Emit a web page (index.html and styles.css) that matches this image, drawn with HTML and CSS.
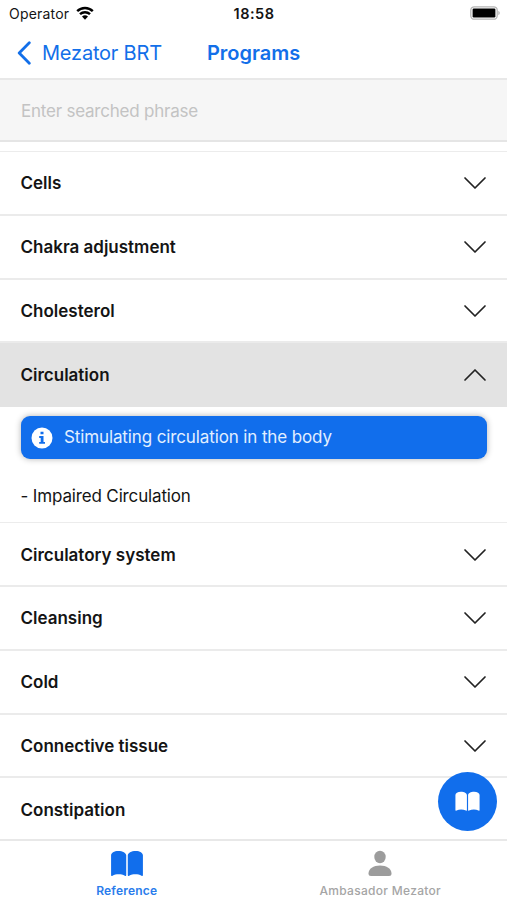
FILE: index.html
```html
<!DOCTYPE html>
<html lang="en">

<head>
    <meta charset="UTF-8">
    <meta name="viewport" content="width=device-width, initial-scale=1.0">
    <title>Programs</title>
    <link rel="stylesheet" href="styles.css">
</head>

<body>

    <svg class="symbols">
        <symbol id="down" viewBox="0 0 24 14">
            <path d="M2 2 L12 12 L22 2" />
        </symbol>
        <symbol id="book" viewBox="0 0 34 28">
            <path d="M0.500 5.500 C0.500 3 3.500 1 8 1 C12.500 1 16.200 3 16.200 5.500 V26 Q16.200 27.500 14.800 26.600 C11 24.600 5.500 24.600 2 26.600 Q0.500 27.500 0.500 26 Z" />
            <path d="M33.500 5.500 C33.500 3 30.500 1 26 1 C21.500 1 17.800 3 17.800 5.500 V26 Q17.800 27.500 19.200 26.600 C23 24.600 28.500 24.600 32 26.600 Q33.500 27.500 33.500 26 Z" />
        </symbol>
    </svg>

    <div class="app">
        <div class="status">
            <div class="operator">
                <span>Operator</span>
                <svg class="wifi" viewBox="0 0 18 14">
                    <path d="M1.200 5.200 A11 11 0 0 1 16.800 5.200" />
                    <path d="M4 8.200 A7.200 7.200 0 0 1 14 8.200" />
                    <path class="dot" d="M6 10.600 A4.400 4.400 0 0 1 12 10.600 L9 13.700 Z" />
                </svg>
            </div>
            <div class="time">18:58</div>
            <svg class="battery" viewBox="0 0 30 14">
                <rect class="battery-case" x="0.800" y="0.800" width="26.400" height="12.400" rx="3.500" />
                <rect x="2.600" y="2.600" width="22.800" height="8.800" rx="1.200" />
                <path class="battery-tip" d="M28.300 4.800 Q29.800 5.500 29.800 7 Q29.800 8.500 28.300 9.200 Z" />
            </svg>
        </div>

        <div class="nav">
            <a class="back">
                <svg viewBox="0 0 14 24">
                    <path d="M12.300 1.800 L2.200 12 L12.300 22.200" />
                </svg>
                <span>Mezator BRT</span>
            </a>
            <h1 class="title">Programs</h1>
        </div>

        <input class="search" type="text" placeholder="Enter searched phrase">

        <ul class="list">
            <li class="item"><span>Cells</span><svg class="arrow"><use href="#down" /></svg></li>
            <li class="item"><span>Chakra adjustment</span><svg class="arrow"><use href="#down" /></svg></li>
            <li class="item"><span>Cholesterol</span><svg class="arrow"><use href="#down" /></svg></li>
            <li class="item open"><span>Circulation</span><svg class="arrow"><use href="#down" /></svg></li>
            <li class="detail">
                <div class="info">
                    <svg viewBox="0 0 22 22">
                        <circle cx="11" cy="11" r="10.500" />
                        <path d="M9.500 4.700 H12.500 V7.300 H9.500 Z M8.200 9 H12.500 V14.900 H14 V16.800 H8.200 V14.900 H9.700 V10.900 H8.200 Z" />
                    </svg>
                    <span>Stimulating circulation in the body</span>
                </div>
                <p class="program">- Impaired Circulation</p>
            </li>
            <li class="item"><span>Circulatory system</span><svg class="arrow"><use href="#down" /></svg></li>
            <li class="item"><span>Cleansing</span><svg class="arrow"><use href="#down" /></svg></li>
            <li class="item"><span>Cold</span><svg class="arrow"><use href="#down" /></svg></li>
            <li class="item"><span>Connective tissue</span><svg class="arrow"><use href="#down" /></svg></li>
            <li class="item"><span>Constipation</span></li>
        </ul>

        <div class="float-button">
            <svg><use href="#book" /></svg>
        </div>

        <div class="tabs">
            <a class="tab active">
                <svg class="tab-book"><use href="#book" /></svg>
                <span>Reference</span>
            </a>
            <a class="tab">
                <svg class="tab-person" viewBox="0 0 24 26">
                    <ellipse cx="12" cy="6.500" rx="5.700" ry="6.200" />
                    <path d="M0.500 23 C0.500 18 5.500 14.900 12 14.900 C18.500 14.900 23.500 18 23.500 23 Q23.500 25.500 21 25.500 H3 Q0.500 25.500 0.500 23 Z" />
                </svg>
                <span>Ambasador Mezator</span>
            </a>
        </div>
    </div>

</body>

</html>
```

FILE: styles.css
```css
* {
    padding: 0;
    margin: 0;
    box-sizing: border-box;
    list-style: none;
}

body {
    font-family: Inter, "Liberation Sans", sans-serif;
    background-color: #fff;
    color: #141414;
}

svg {
    flex-shrink: 0;
}

.symbols {
    display: none;
}

.app {
    position: relative;
    display: flex;
    flex-direction: column;
    height: 900px;
    overflow: hidden;
}

/* status bar */
.status {
    display: grid;
    grid-template-columns: 1fr auto 1fr;
    align-items: center;
    height: 27px;
    padding: 0 7px 0 9px;
    font-size: 14px;
}

.operator {
    display: flex;
    align-items: center;
    gap: 7px;
    letter-spacing: 0.2px;
}

.wifi {
    width: 18px;
    height: 14px;
    margin-top: -2px;
    fill: none;
    stroke: #000;
    stroke-width: 2.4;
}

.wifi .dot {
    fill: #000;
    stroke: none;
}

.time {
    margin-right: 1px;
    font-weight: 600;
    font-size: 14.5px;
    letter-spacing: 0.5px;
}

.battery {
    width: 30px;
    height: 14px;
    margin-top: -1px;
    justify-self: end;
}

.battery-case {
    fill: #fff;
    stroke: #b5b5b5;
    stroke-width: 1.3;
}

.battery-tip {
    fill: #b5b5b5;
}

/* navigation */
.nav {
    display: flex;
    align-items: center;
    gap: 45px;
    height: 53px;
    padding: 0 16px 0 17px;
    border-bottom: 2px solid #e8e8e8;
    color: #126fe9;
    font-size: 20px;
}

.back {
    display: flex;
    align-items: center;
    gap: 11px;
    letter-spacing: -0.2px;
}

.back svg {
    width: 14px;
    height: 24px;
    fill: none;
    stroke: #126fe9;
    stroke-width: 2.8;
    stroke-linecap: round;
    stroke-linejoin: round;
}

.title {
    font-size: 20px;
    font-weight: 600;
}

.search {
    flex-shrink: 0;
    height: 62px;
    padding: 1px 21px 0;
    border: none;
    border-bottom: 2px solid #e5e5e5;
    background-color: #f6f6f6;
    font-family: inherit;
    font-size: 17px;
    letter-spacing: -0.22px;
    outline: none;
}

.search::placeholder {
    color: #c3c3c3;
}

/* list of programs */
.list {
    flex: 1;
    min-height: 0;
    margin-top: 9px;
    border-top: 1px solid #ececec;
    overflow: hidden;
}

.item {
    display: flex;
    justify-content: space-between;
    align-items: center;
    height: 63.8px;
    padding: 1px 20px 0 20.5px;
    border-bottom: 2px solid #ebebeb;
    font-size: 17px;
    font-weight: 600;
}

.arrow {
    width: 24px;
    height: 14px;
    fill: none;
    stroke: #222;
    stroke-width: 1.7;
    stroke-linecap: round;
    stroke-linejoin: round;
}

.open {
    background-color: #e3e3e3;
    border-color: #e3e3e3;
}

.open .arrow {
    transform: rotate(180deg);
}

.detail {
    height: 116px;
    padding: 9px 20px 0 20.5px;
    border-bottom: 1px solid #ececec;
}

.info {
    display: flex;
    align-items: center;
    gap: 11px;
    height: 43px;
    padding: 0 10.5px;
    border-radius: 9px;
    background-color: #116eec;
    box-shadow: 0 0 6px rgba(0, 0, 0, 0.3);
    color: #e2efff;
    font-size: 17px;
    letter-spacing: -0.12px;
}

.info span {
    padding-bottom: 2px;
}

.info svg {
    width: 22px;
    height: 22px;
    fill: #fff;
}

.info svg path {
    fill: #116eec;
}

.program {
    margin-top: 26.5px;
    font-size: 17px;
    letter-spacing: -0.15px;
    line-height: 21px;
}

/* button over the list */
.float-button {
    position: absolute;
    right: 10px;
    bottom: 69.5px;
    display: flex;
    justify-content: center;
    align-items: center;
    width: 59px;
    height: 59px;
    border-radius: 50%;
    background-color: #116eec;
}

.float-button svg {
    width: 25px;
    height: 20.5px;
    margin-top: 1px;
    fill: #fff;
}

/* bottom tabs */
.tabs {
    display: flex;
    height: 61px;
    border-top: 2px solid #e8e8e8;
    background-color: #fff;
}

.tab {
    flex: 1;
    display: flex;
    flex-direction: column;
    align-items: center;
    gap: 6px;
    padding-top: 9px;
    color: #a5a5a5;
    font-size: 12px;
    font-weight: 500;
    letter-spacing: 0.3px;
    fill: #9c9c9c;
}

.active {
    color: #2a7cec;
    font-weight: 600;
    letter-spacing: 0.2px;
    fill: #116eec;
}

.tab-book {
    width: 34px;
    height: 27px;
}

.tab-person {
    width: 24px;
    height: 27px;
}
```
